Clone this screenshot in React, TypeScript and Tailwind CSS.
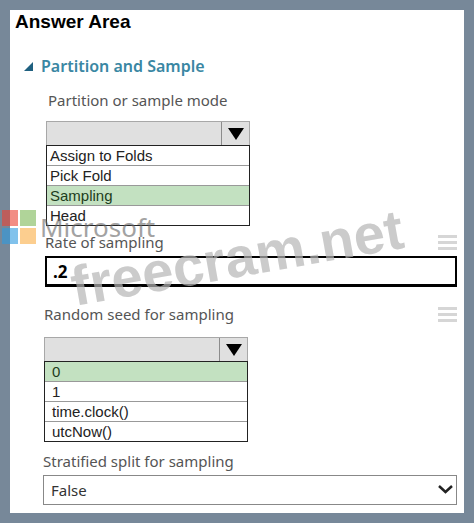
import { useState } from 'react'
import type { ReactNode } from 'react'
import clsx from 'clsx'

const MODES = ['Assign to Folds', 'Pick Fold', 'Sampling', 'Head']
const SEEDS = ['0', '1', 'time.clock()', 'utcNow()']

const labelClass = 'block text-[15px] leading-6 text-[#555]'

function Dropdown({
  label,
  options,
  initial,
  optionClass,
}: {
  label: string
  options: string[]
  initial: string
  optionClass: string
}) {
  const [selected, setSelected] = useState(initial)

  return (
    <div className="w-[204px] font-['Liberation_Sans',Arial,sans-serif]">
      <button
        type="button"
        aria-label={label}
        aria-expanded="true"
        className="flex h-6 w-full border border-b-0 border-[#a8a8a8] bg-[#e0e0e0]"
      >
        <span className="flex-1" />
        <span className="flex h-full w-7 items-center justify-center border-l border-[#8c8c8c]">
          <svg className="h-3 w-4" viewBox="0 0 16 12" aria-hidden="true">
            <path d="M0 0h16L8 12z" fill="#000" />
          </svg>
        </span>
      </button>
      <ul role="listbox" aria-label={label} className="divide-y divide-[#999] border border-[#222] bg-white">
        {options.map((option) => (
          <li key={option} role="option" aria-selected={option === selected}>
            <button
              type="button"
              onClick={() => setSelected(option)}
              className={clsx(
                'block w-full text-left text-[15px] leading-[19px]',
                optionClass,
                option === selected ? 'bg-[#c3e1c1] text-[#1d3d20]' : 'text-[#222]',
              )}
            >
              {option}
            </button>
          </li>
        ))}
      </ul>
    </div>
  )
}

function MenuButton({ label }: { label: string }) {
  return (
    <button type="button" aria-label={label} className="flex flex-col gap-[3px]">
      <span className="h-[3px] w-[19px] bg-[#d6d6d6]" />
      <span className="h-[3px] w-[19px] bg-[#d6d6d6]" />
      <span className="h-[3px] w-[19px] bg-[#d6d6d6]" />
    </button>
  )
}

function LabelRow({ menu, children }: { menu: string; children: ReactNode }) {
  return (
    <div className="flex items-center justify-between">
      {children}
      <MenuButton label={menu} />
    </div>
  )
}

function MicrosoftMark() {
  return (
    <div className="pointer-events-none absolute top-[210px] left-0.5 flex items-center gap-1 opacity-60">
      <svg className="h-[34px] w-[34px]" viewBox="0 0 34 34" aria-hidden="true">
        <path d="M0 0h16v16H0z" fill="#ea4335" />
        <path d="M18 0h16v16H18z" fill="#7db956" />
        <path d="M0 18h16v16H0z" fill="#2f9be0" />
        <path d="M18 18h16v16H18z" fill="#fbaf45" />
      </svg>
      <span className="text-[26px] leading-8 text-[#666]">Microsoft</span>
    </div>
  )
}

export default function App() {
  const [rate, setRate] = useState('.2')

  return (
    <div className="relative overflow-hidden bg-[#778899] p-2.5 font-['Noto_Sans','Open_Sans',sans-serif]">
      <main className="bg-white pr-[7px] pb-2">
        <h1 className="pl-[5px] font-['Liberation_Sans',Arial,sans-serif] text-[19px] leading-6 font-bold text-black">
          Answer Area
        </h1>

        <h2 className="mt-5 flex items-center gap-2 pl-3.5 text-[16px] leading-6 font-semibold text-[#3a87a3]">
          <svg className="h-[9px] w-[9px]" viewBox="0 0 9 9" aria-hidden="true">
            <path d="M9 0v9H0z" fill="#1f6080" />
          </svg>
          Partition and Sample
        </h2>

        <section className="mt-2.5 pl-9">
          <span className={clsx(labelClass, 'pl-0.5')}>Partition or sample mode</span>
          <div className="mt-[9px]">
            <Dropdown label="Partition or sample mode" options={MODES} initial="Sampling" optionClass="pl-[3px]" />
          </div>
        </section>

        <section className="mt-1 pl-[35px]">
          <LabelRow menu="Rate of sampling options">
            <label htmlFor="rate" className={labelClass}>
              Rate of sampling
            </label>
          </LabelRow>
          <input
            id="rate"
            value={rate}
            onChange={(e) => setRate(e.target.value)}
            className="mt-0.5 block h-[31px] w-full border-2 border-b-3 border-black bg-white pl-1.5 text-[17px] leading-6 font-bold text-black outline-none"
          />
        </section>

        <section className="mt-[15px] pl-[34px]">
          <LabelRow menu="Random seed options">
            <span className={labelClass}>Random seed for sampling</span>
          </LabelRow>
          <div className="mt-[11px]">
            <Dropdown label="Random seed for sampling" options={SEEDS} initial="0" optionClass="pl-[7px]" />
          </div>
        </section>

        <section className="mt-[7px] pl-[33px]">
          <label htmlFor="split" className={labelClass}>
            Stratified split for sampling
          </label>
          <div className="relative mt-0.5">
            <select
              id="split"
              defaultValue="False"
              className="block h-[30px] w-full appearance-none border border-[#888] bg-white pl-[7px] text-[15px] text-[#333]"
            >
              <option>False</option>
              <option>True</option>
            </select>
            <svg
              className="pointer-events-none absolute top-2.5 right-1 h-[9px] w-[15px]"
              viewBox="0 0 15 9"
              fill="none"
              aria-hidden="true"
            >
              <path d="M1 1l6.5 6L14 1" stroke="#222" strokeWidth="2.5" />
            </svg>
          </div>
        </section>
      </main>

      <MicrosoftMark />
      <div className="pointer-events-none absolute top-[258px] left-1/2 -translate-x-1/2 -translate-y-1/2 -rotate-10 font-['Liberation_Sans',Arial,sans-serif] text-[56px] leading-none font-bold text-[#b6b6b6] opacity-70">
        freecram.net
      </div>
    </div>
  )
}
